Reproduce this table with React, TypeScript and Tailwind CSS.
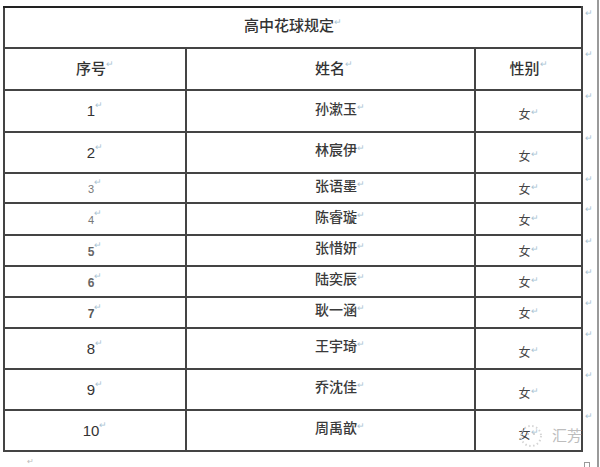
const rows = [
  { no: '1', name: '孙漱玉', h: 'h-[42px]', noCls: 'text-[15px] text-[#333]', gPad: 'pt-[8px]' },
  { no: '2', name: '林宸伊', h: 'h-[41px]', noCls: 'text-[15px] text-[#333]', gPad: 'pt-[8px]' },
  { no: '3', name: '张语墨', h: 'h-[30px]', noCls: 'text-[11px] text-[#777]', gPad: 'pt-[4px]' },
  { no: '4', name: '陈睿璇', h: 'h-[32px]', noCls: 'text-[11px] text-[#777]', gPad: 'pt-[4px]' },
  { no: '5', name: '张惜妍', h: 'h-[31px]', noCls: 'text-[12px] font-semibold text-[#666]', gPad: 'pt-[3px]' },
  { no: '6', name: '陆奕辰', h: 'h-[31px]', noCls: 'text-[12px] font-semibold text-[#666]', gPad: 'pt-[3px]' },
  { no: '7', name: '耿一涵', h: 'h-[31px]', noCls: 'text-[12px] font-semibold text-[#555]', gPad: 'pt-[3px]' },
  { no: '8', name: '王宇琦', h: 'h-[41px]', noCls: 'text-[15px] text-[#333]', gPad: 'pt-[8px]' },
  { no: '9', name: '乔沈佳', h: 'h-[41px]', noCls: 'text-[15px] text-[#333]', gPad: 'pt-[8px]' },
  { no: '10', name: '周禹歆', h: 'h-[41px]', noCls: 'text-[15px] text-[#333]', gPad: 'pt-[8px]' },
];

const Mark = () => <span className="text-[9px] text-[#a9c3d3] align-top">↵</span>;

const cell = 'border-2 border-[#444] p-0 align-middle';

export default function App() {
  return (
    <div
      className="relative w-[600px] h-[467px] bg-white overflow-hidden"
      style={{ fontFamily: '"Liberation Sans", "Noto Sans CJK SC", sans-serif' }}
    >
      {/* page edge on the right */}
      <div className="absolute top-0 bottom-0 left-[597px] w-[2px] bg-[#9a9a9a]" />

      <div className="pt-[6px] pl-[3px]">
        <table className="table-fixed border-collapse w-[596px]">
          <colgroup>
            <col className="w-[182px]" />
            <col className="w-[289px]" />
            <col className="w-[107px]" />
            <col className="w-[18px]" />
          </colgroup>
          <tbody>
            <tr className="h-[41px]">
              <td colSpan={3} className={`${cell} border-t-[#222] text-center text-[15px] font-medium text-[#333]`}>
                <span className="relative top-[-1px]">高中花球规定</span>
                <Mark />
              </td>
              <td className="p-0 pl-[2px] align-top">
                <Mark />
              </td>
            </tr>
            <tr className="h-[42px]">
              <td className={`${cell} text-center text-[15px] font-medium text-[#333]`}>
                序号
                <Mark />
              </td>
              <td className={`${cell} pl-[128px] text-[15px] font-medium text-[#333]`}>
                姓名
                <Mark />
              </td>
              <td className={`${cell} text-center text-[15px] font-medium text-[#333]`}>
                性别
                <Mark />
              </td>
              <td className="p-0 pl-[2px] align-top">
                <Mark />
              </td>
            </tr>
            {rows.map((r) => (
              <tr key={r.no} className={r.h}>
                <td className={`${cell} text-center`}>
                  <span className={r.noCls}>{r.no}</span>
                  <Mark />
                </td>
                <td className={`${cell} pl-[128px] text-[14px] font-medium text-[#3a3a3a]`}>
                  <span className="relative top-[-2px]">{r.name}</span>
                  <Mark />
                </td>
                <td className={`${cell} text-center text-[12px] text-[#444]`}>
                  <div className={r.gPad}>
                    女
                    <Mark />
                  </div>
                </td>
                <td className="p-0 pl-[2px] align-top">
                  <Mark />
                </td>
              </tr>
            ))}
          </tbody>
        </table>

        <div className="flex items-start justify-between pl-[24px] pr-[10px] pt-[4px]">
          <span className="text-[8px] text-[#bbb]">↵</span>
          <span className="mt-[6px] w-[6px] h-[6px] border border-[#999]" />
        </div>
      </div>

      {/* watermark */}
      <div className="absolute left-[518px] top-[422px] flex items-center gap-[6px]">
        <svg width="28" height="26" viewBox="0 0 28 26">
          <circle cx="13" cy="14" r="10" fill="none" stroke="#d5d5d5" strokeWidth="2" strokeDasharray="1.5 2.5" />
          <circle cx="10" cy="12" r="1" fill="#c8c8c8" />
          <circle cx="16" cy="12" r="1" fill="#c8c8c8" />
        </svg>
        <span className="text-[15px] text-[#bdbdbd]" style={{ fontFamily: '"Noto Sans CJK SC", sans-serif' }}>
          汇芳
        </span>
      </div>
    </div>
  );
}
